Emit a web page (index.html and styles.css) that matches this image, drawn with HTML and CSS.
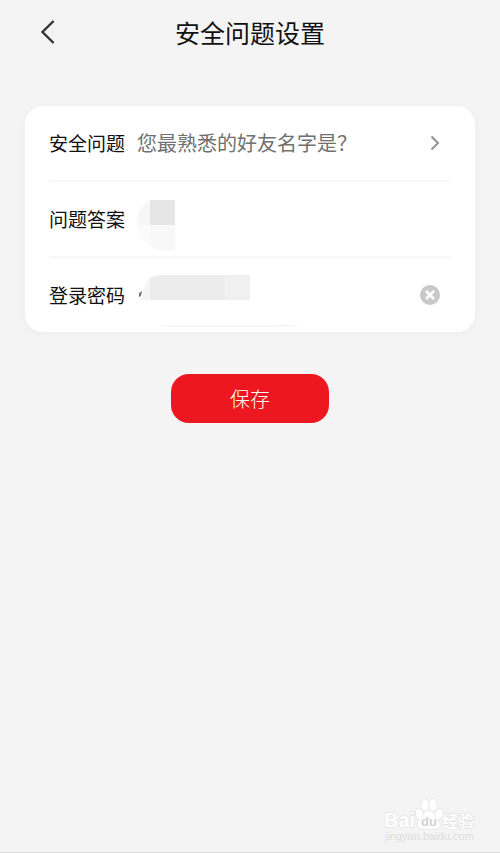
FILE: index.html
```html
<!DOCTYPE html>
<html lang="zh-CN">
<head>
<meta charset="utf-8">
<meta name="viewport" content="width=device-width, initial-scale=1">
<title>安全问题设置</title>
<link rel="stylesheet" href="styles.css">
</head>
<body>
<header class="topbar">
  <button class="back" type="button" aria-label="返回">
    <svg width="16" height="26" viewBox="0 0 16 26" fill="none" stroke="#333" stroke-width="2.4"><path d="M13.6 2 2.5 13 13.6 24"/></svg>
  </button>
  <h1 class="title">安全问题设置</h1>
</header>
<main class="content">
  <form class="form">
    <div class="card">
      <div class="row">
        <label class="label" for="question">安全问题</label>
        <button class="value" id="question" type="button">
          <span>您最熟悉的好友名字是？</span>
          <svg width="10" height="16" viewBox="0 0 10 16" fill="none" stroke="#929292" stroke-width="2"><path d="m1.5 1.5 6.5 6.5-6.5 6.5"/></svg>
        </button>
      </div>
      <div class="row">
        <label class="label" for="answer">问题答案</label>
        <div class="field">
          <input class="input" id="answer" type="text">
          <svg class="mask" width="170" height="56" viewBox="0 0 170 56" aria-hidden="true">
            <path fill="#f7f7f7" d="M13 5v25H0C0 18 5 9 13 5Z"/>
            <path fill="#fbfbfb" d="M0 30h13v21C6 48 2 40 0 30Z"/>
            <path fill="#e6e6e6" d="M13 5h25v25H13z"/>
            <path fill="#f8f8f8" d="M13 30h25v25H26c-6 0-10-2-13-5Z"/>
          </svg>
        </div>
      </div>
      <div class="row">
        <label class="label" for="password">登录密码</label>
        <div class="field">
          <input class="input" id="password" type="password">
          <svg class="mask" width="170" height="56" viewBox="0 0 170 56" aria-hidden="true">
            <path fill="#777" d="M5 20 2 22v4l2-1Z"/>
            <path fill="#f5f5f5" d="M13 7v22H5C6 19 8 12 13 7Z"/>
            <path fill="#ececec" d="M13 7c4-2 8-3 13-3h62v25H13Z"/>
            <path fill="#f0f0f0" d="M88 4h25v25H88z"/>
            <path fill="#f6f6f6" d="M22 54h105q22-1 39 0-10 2-39 2H38q-10 0-16-2Z"/>
          </svg>
          <button class="clear" type="button" aria-label="清除">
            <svg width="20" height="20" viewBox="0 0 20 20"><circle cx="10" cy="10" r="10" fill="#c8c8c8"/><path d="m6.8 6.800 6.400 6.400m0-6.400-6.400 6.400" stroke="#fff" stroke-width="2.800" stroke-linecap="round"/></svg>
          </button>
        </div>
      </div>
    </div>
    <button class="save" type="button">保存</button>
  </form>
</main>
<footer class="footer">
  <svg class="watermark" width="98" height="48" viewBox="0 0 98 48" role="img" aria-label="Baidu 经验">
    <g fill="#fff" stroke="#dcdcdc" stroke-width="1" paint-order="stroke">
      <text class="mark-latin" x="0" y="31">Bai</text>
      <ellipse cx="35.500" cy="18" rx="3.800" ry="5.500" transform="rotate(-15 35.500 18)"/>
      <ellipse cx="41" cy="9" rx="3.800" ry="6"/>
      <ellipse cx="49" cy="9" rx="3.800" ry="6"/>
      <ellipse cx="55" cy="18" rx="3.800" ry="5.500" transform="rotate(15 55 18)"/>
      <path d="M44.500 15c6 0 6 5 9 8s4 10-3 10h-11c-7 0-7-7-3-10s2-8 8-8Z"/>
      <text class="mark-cjk" x="58" y="31">经验</text>
    </g>
    <text class="mark-du" x="37" y="30">du</text>
    <text class="mark-url" x="1" y="44">jingyan.baidu.com</text>
  </svg>
</footer>
</body>
</html>
```

FILE: styles.css
```css
* {
  box-sizing: border-box;
}

body {
  display: flex;
  flex-direction: column;
  min-height: 100vh;
  margin: 0;
  background: #f4f4f4;
  color: #111;
  font-family: "Noto Sans CJK SC", sans-serif;
}

button,
input {
  margin: 0;
  padding: 0;
  border: 0;
  background: none;
  color: inherit;
  font: inherit;
}

svg {
  display: block;
  flex: none;
}

.topbar {
  display: grid;
  grid-template-columns: 1fr auto 1fr;
  align-items: center;
  height: 64px;
  padding: 0 40px;
}

.back {
  justify-self: start;
}

.title {
  margin: 0;
  font-size: 25px;
  font-weight: 400;
  line-height: 36px;
}

.content {
  flex: 1;
  padding: 42px 25px;
}

.form {
  display: flex;
  flex-direction: column;
  align-items: center;
  gap: 42px;
}

.card {
  align-self: stretch;
  padding: 0 24px;
  border-radius: 18px;
  background: #fff;
  box-shadow: 0 2px 12px rgba(0, 0, 0, 0.03);
}

.row {
  display: flex;
  align-items: center;
  gap: 12px;
  height: 76px;
  border-bottom: 2px solid #f8f8f8;
  font-size: 19px;
  line-height: 28px;
}

.row:last-child {
  height: 74px;
  border-bottom: 0;
}

.label {
  flex: none;
}

.value,
.field {
  position: relative;
  display: flex;
  flex: 1;
  align-items: center;
  justify-content: space-between;
  min-width: 0;
  padding-right: 11px;
}

.value {
  color: #707070;
  text-align: left;
}

.input {
  flex: 1;
  min-width: 0;
  height: 56px;
  outline: 0;
}

.mask {
  position: absolute;
  top: 4px;
  left: 0;
  pointer-events: none;
}

.value,
.save {
  font-size: 20px;
  line-height: 30px;
}

.save {
  width: 158px;
  height: 49px;
  border-radius: 18px;
  background: #ec171f;
  color: #fff;
  font-weight: 300;
}

.footer {
  display: flex;
  justify-content: flex-end;
  padding: 0 18px 8px;
  border-bottom: 1px solid #ddd;
}

.mark-latin,
.mark-du {
  font-family: "Liberation Sans", sans-serif;
  font-weight: 700;
}

.mark-latin {
  font-size: 20px;
}

.mark-du {
  fill: #d2d2d2;
  font-size: 13px;
}

.mark-cjk {
  font-size: 16px;
  font-weight: 700;
}

.mark-url {
  fill: #dedede;
  font-family: "Liberation Sans", sans-serif;
  font-size: 11px;
}
```
